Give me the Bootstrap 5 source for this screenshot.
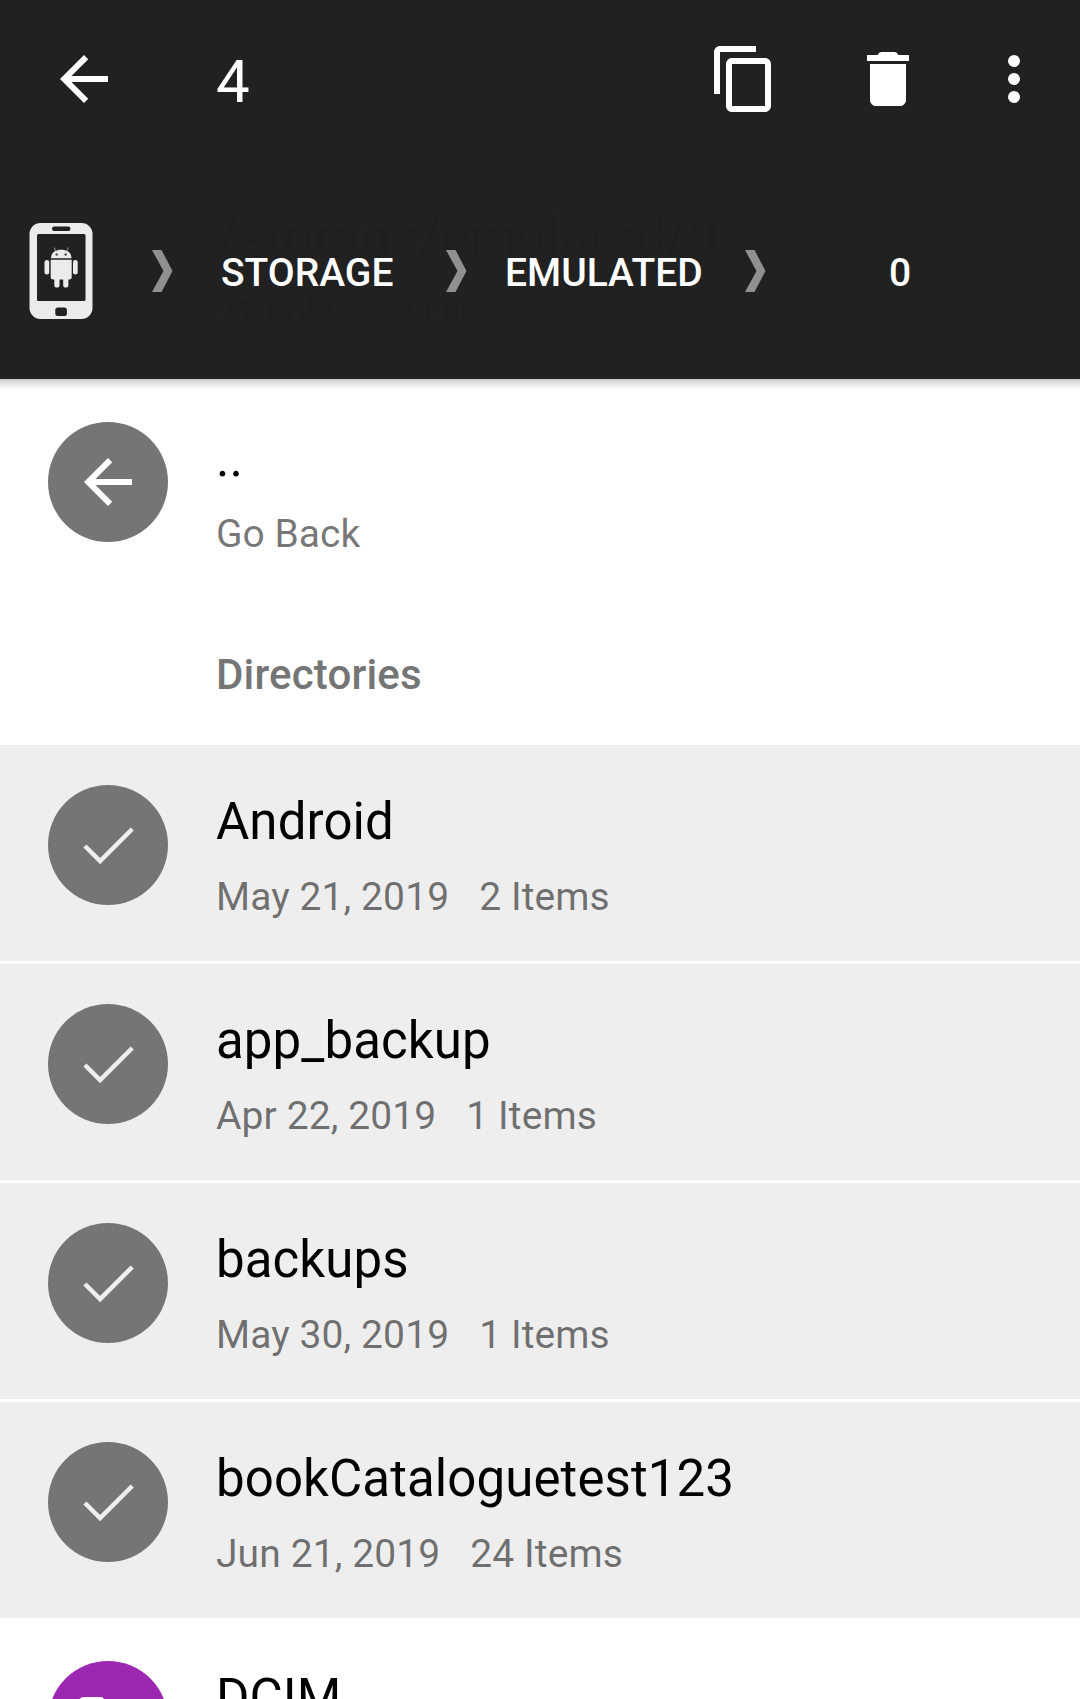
<!DOCTYPE html>
<html lang="en">
<head>
<meta charset="utf-8">
<meta name="viewport" content="width=device-width, initial-scale=1">
<title>File manager</title>
<link href="https://cdn.jsdelivr.net/npm/bootstrap@5.3.0/dist/css/bootstrap.min.css" rel="stylesheet">
<style>
  body { font-family: Roboto, "Noto Sans", sans-serif; color: #000; background: #fff; }
  .screen { width: 1080px; height: 1699px; }
  .app-header { height: 379px; background: #212121; color: #fff; z-index: 2; }
  .app-header::after { content: ""; position: absolute; left: 0; right: 0; top: 100%; height: 12px;
    background: linear-gradient(rgba(0,0,0,.22), rgba(0,0,0,.11) 35%, rgba(0,0,0,.03) 75%, transparent); }
  .ic { width: 72px; height: 72px; flex: none; display: block; }
  .toolbar { height: 158px; padding: 0 30px 0 48px; }
  .sel-count { font-size: 60px; line-height: 70px; margin-left: 96px; padding-top: 5px; }
  .acts { gap: 72px; }
  .acts .more { margin-left: -18px; }
  .crumbs { height: 226px; padding-left: 29px; font-weight: 500; font-size: 39px; line-height: 46px; }
  .phone { width: 64px; height: 98px; flex: none; }
  .sep { width: 22px; height: 44px; flex: none; }
  .sep-first { margin-left: 58px; }
  .crumb { padding-top: 4px; white-space: nowrap; }
  .c1 { width: 272px; padding-left: 48px; }
  .c2 { width: 277px; padding-left: 38px; }
  .c3 { width: 268px; }
  .ghost { left: 216px; top: 207px; color: #1f1f1f; white-space: nowrap; }
  .ghost-path { font-size: 54px; line-height: 60px; letter-spacing: -.1px; }
  .ghost-info { font-size: 36px; line-height: 46px; margin-top: 23px; }
  .file-list { padding-top: 3px; }
  .entry { height: 216px; padding: 40px 48px 0; gap: 48px; margin-bottom: 3px; flex: none; }
  .entry.picked { background: #eee; }
  .disc { width: 120px; height: 120px; background: #757575; flex: none; }
  .disc.folder { background: #9c27b0; }
  .fname { font-size: 51px; line-height: 60px; letter-spacing: .1px; margin-top: 7px; white-space: nowrap; }
  .fmeta { font-size: 39px; line-height: 46px; margin-top: 22px; gap: 31px; color: rgba(0,0,0,.54); white-space: nowrap; }
  .picked .fmeta { letter-spacing: .1px; gap: 30px; }
  .group-title { height: 144px; padding: 4px 0 0 216px; font-weight: 500; font-size: 42px; line-height: 50px; letter-spacing: .15px; color: #757575; flex: none; }
</style>
</head>
<body>
<svg class="d-none" xmlns="http://www.w3.org/2000/svg">
  <symbol id="back" viewBox="0 0 24 24"><path d="M20 11H7.830l5.590-5.590L12 4l-8 8 8 8 1.410-1.410L7.830 13H20v-2z"/></symbol>
  <symbol id="tick" viewBox="0 0 72 72"><path d="M12.900 37 28.100 52 60.200 20" fill="none" stroke="#eee" stroke-width="4.500"/></symbol>
  <symbol id="chev" viewBox="0 0 22 44"><path d="M1 1h9.500L21.500 22 10.500 43H1l11.500-21z" fill="#909090"/></symbol>
</svg>
<div class="screen d-flex flex-column overflow-hidden">
  <header class="app-header position-relative flex-shrink-0">
    <div class="ghost position-absolute">
      <div class="ghost-path">/storage/emulated/0</div>
      <div class="ghost-info">21 Folders 2 Files</div>
    </div>
    <div class="toolbar d-flex align-items-center">
      <svg class="ic" fill="#fff"><use href="#back"/></svg>
      <div class="sel-count">4</div>
      <div class="acts d-flex ms-auto">
        <svg class="ic" viewBox="0 0 24 24" fill="#fff"><path d="M16 1H4c-1.100 0-2 .9-2 2v14h2V3h12V1zm3 4H8c-1.100 0-2 .9-2 2v14c0 1.100.9 2 2 2h11c1.100 0 2-.9 2-2V7c0-1.100-.9-2-2-2zm0 16H8V7h11v14z"/></svg>
        <svg class="ic" viewBox="0 0 24 24" fill="#fff"><path d="M6 19c0 1.100.9 2 2 2h8c1.100 0 2-.9 2-2V7H6v12zM19 4h-3.500q-.6-1-1.200-1H9.700q-.6 0-1.200 1H5v2h14V4z"/></svg>
        <svg class="ic more" viewBox="0 0 24 24" fill="#fff"><circle cx="12" cy="6" r="2"/><circle cx="12" cy="12" r="2"/><circle cx="12" cy="18" r="2"/></svg>
      </div>
    </div>
    <nav class="crumbs d-flex align-items-center position-relative">
      <svg class="phone" viewBox="0 0 64 98">
        <rect x=".5" y="1" width="63" height="96" rx="11" fill="#ebebeb"/>
        <g fill="#212121"><rect x="8" y="12" width="48.500" height="67" rx="1.500"/><rect x="23" y="4.500" width="18.500" height="4.500" rx="2.200"/><rect x="26.300" y="85.500" width="11.600" height="8.500" rx="2.500"/></g>
        <g fill="#ebebeb"><path d="M22 36.300c0-5.500 4-8.500 10.200-8.500s10.300 3 10.300 8.500z"/>
          <path d="M21.700 37.800h21v17.500q0 2.200-2.200 2.200h-1.100V63a2.600 2.600 0 0 1-5.200 0v-5.500h-3.700V63a2.600 2.600 0 0 1-5.200 0v-5.500h-1.400q-2.200 0-2.200-2.200z"/>
          <rect x="15.500" y="38" width="4.700" height="14.500" rx="2.300"/><rect x="44" y="38" width="4.700" height="14.500" rx="2.300"/></g>
        <path d="m25 25.500 2.300 4M39.500 25.500l-2.300 4" stroke="#a0a0a0" stroke-width="1"/>
        <circle cx="27.700" cy="32.500" r="1.300" fill="#555"/><circle cx="36.700" cy="32.500" r="1.300" fill="#555"/>
      </svg>
      <svg class="sep sep-first"><use href="#chev"/></svg>
      <div class="crumb c1">STORAGE</div>
      <svg class="sep"><use href="#chev"/></svg>
      <div class="crumb c2">EMULATED</div>
      <svg class="sep"><use href="#chev"/></svg>
      <div class="crumb c3 text-center">0</div>
    </nav>
  </header>
  <main class="file-list d-flex flex-column">
    <div class="entry d-flex">
      <div class="disc rounded-circle d-flex align-items-center justify-content-center"><svg class="ic" fill="#fff"><use href="#back"/></svg></div>
      <div><div class="fname">..</div><div class="fmeta">Go Back</div></div>
    </div>
    <div class="group-title d-flex align-items-center">Directories</div>
    <div class="entry picked d-flex">
      <div class="disc rounded-circle d-flex align-items-center justify-content-center"><svg class="ic"><use href="#tick"/></svg></div>
      <div><div class="fname">Android</div><div class="fmeta d-flex"><span>May 21, 2019</span><span>2 Items</span></div></div>
    </div>
    <div class="entry picked d-flex">
      <div class="disc rounded-circle d-flex align-items-center justify-content-center"><svg class="ic"><use href="#tick"/></svg></div>
      <div><div class="fname">app_backup</div><div class="fmeta d-flex"><span>Apr 22, 2019</span><span>1 Items</span></div></div>
    </div>
    <div class="entry picked d-flex">
      <div class="disc rounded-circle d-flex align-items-center justify-content-center"><svg class="ic"><use href="#tick"/></svg></div>
      <div><div class="fname">backups</div><div class="fmeta d-flex"><span>May 30, 2019</span><span>1 Items</span></div></div>
    </div>
    <div class="entry picked d-flex">
      <div class="disc rounded-circle d-flex align-items-center justify-content-center"><svg class="ic"><use href="#tick"/></svg></div>
      <div><div class="fname">bookCataloguetest123</div><div class="fmeta d-flex"><span>Jun 21, 2019</span><span>24 Items</span></div></div>
    </div>
    <div class="entry d-flex">
      <div class="disc folder rounded-circle d-flex align-items-center justify-content-center"><svg class="ic" viewBox="0 0 24 24" fill="#fff"><path d="M10 4H4c-1.100 0-1.990.9-1.990 2L2 18c0 1.100.9 2 2 2h16c1.100 0 2-.9 2-2V8c0-1.100-.9-2-2-2h-8l-2-2z"/></svg></div>
      <div><div class="fname">DCIM</div></div>
    </div>
  </main>
</div>
<script src="https://cdn.jsdelivr.net/npm/bootstrap@5.3.0/dist/js/bootstrap.bundle.min.js"></script>
</body>
</html>
